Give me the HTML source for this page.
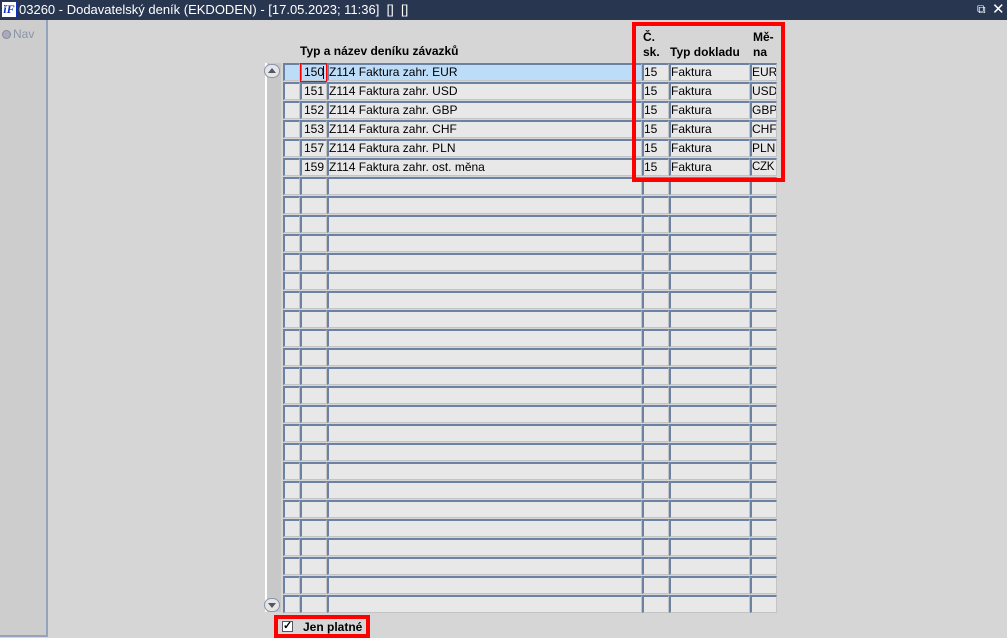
<!DOCTYPE html>
<html><head><meta charset="utf-8"><style>
*{margin:0;padding:0;box-sizing:border-box}
body{width:1007px;height:638px;overflow:hidden;background:#d6d6d6;font-family:"Liberation Sans",Arial,sans-serif;font-size:12px;position:relative}
.tb{position:absolute;left:0;top:0;width:1007px;height:20px;background:#283650;color:#fff;font-size:13px}
.tb .t{position:absolute;left:19px;top:2px}
.logo{position:absolute;left:1px;top:1px;width:16px;height:17px;background:#fff;border:1px solid #1030c0;color:#1030c0;font:bold italic 12px "Liberation Serif",serif;text-align:center;line-height:15px}
.lp{position:absolute;left:0;top:20px;width:48px;height:617px;background:#cdcdcd;border-right:2px solid #95a3bc;border-bottom:2px solid #95a3bc}
.nav{position:absolute;left:2px;top:27px;color:#8a94a8;font-size:12px}
.nav i{display:inline-block;width:9px;height:9px;border-radius:50%;background:#aab;border:1px solid #889;vertical-align:-1px;margin-right:2px}
.c{position:absolute;height:18px;background:#e8e8e8;border-top:2px solid #6d82a3;border-left:2px solid #6d82a3;border-right:1px solid #c4c4c4;border-bottom:1px solid #c4c4c4;line-height:14px;padding-left:0;white-space:nowrap;overflow:hidden}
.r{text-align:right;padding-right:2px}
.h{position:absolute;font-weight:bold;font-size:12px;line-height:15px}
.sb{position:absolute;left:265px;top:63px;width:16px;height:549px;background:#c8c8c8;border-left:2px solid #fff}
.btn{position:absolute;left:264px;width:16px;height:14px;background:#e6e6e6;border:1px solid #8a96ad;border-radius:7px}
.red{position:absolute;border:4px solid #f00}
</style></head><body>
<div class="tb"><div class="logo">ĭF</div><span class="t">03260 - Dodavatelský deník (EKDODEN) - [17.05.2023; 11:36]&nbsp; [] &nbsp;[]</span>
<span style="position:absolute;left:977px;top:2px;font-size:12px">⧉</span><span style="position:absolute;left:992px;top:0px;font-size:15px">✕</span></div>
<div class="lp"></div>
<div class="nav"><i></i>Nav</div>
<div class="h" style="left:300px;top:44px">Typ a název deníku závazků</div>
<div class="h" style="left:643px;top:30px">Č.<br>sk.</div>
<div class="h" style="left:670px;top:45px">Typ dokladu</div>
<div class="h" style="left:753px;top:30px">Mě-<br>na</div>
<div class="sb"></div>
<div class="btn" style="top:64px"><span style="position:absolute;left:3px;top:3px;width:0;height:0;border-left:4px solid transparent;border-right:4px solid transparent;border-bottom:5px solid #556"></span></div>
<div class="btn" style="top:598px"><span style="position:absolute;left:3px;top:4px;width:0;height:0;border-left:4px solid transparent;border-right:4px solid transparent;border-top:5px solid #556"></span></div>
<div id="g">
<div class="c" style="left:283px;top:63px;width:17px;background:#bcdcf8"></div><div class="c r" style="left:300px;top:63px;width:27px;background:#bcdcf8">150</div><div class="c" style="left:327px;top:63px;width:315px;background:#bcdcf8">Z114 Faktura zahr. EUR</div><div class="c" style="left:642px;top:63px;width:27px">15</div><div class="c" style="left:669px;top:63px;width:81px">Faktura</div><div class="c" style="left:750px;top:63px;width:27px">EUR</div>
<div class="c" style="left:283px;top:82px;width:17px"></div><div class="c r" style="left:300px;top:82px;width:27px">151</div><div class="c" style="left:327px;top:82px;width:315px">Z114 Faktura zahr. USD</div><div class="c" style="left:642px;top:82px;width:27px">15</div><div class="c" style="left:669px;top:82px;width:81px">Faktura</div><div class="c" style="left:750px;top:82px;width:27px">USD</div>
<div class="c" style="left:283px;top:101px;width:17px"></div><div class="c r" style="left:300px;top:101px;width:27px">152</div><div class="c" style="left:327px;top:101px;width:315px">Z114 Faktura zahr. GBP</div><div class="c" style="left:642px;top:101px;width:27px">15</div><div class="c" style="left:669px;top:101px;width:81px">Faktura</div><div class="c" style="left:750px;top:101px;width:27px">GBP</div>
<div class="c" style="left:283px;top:120px;width:17px"></div><div class="c r" style="left:300px;top:120px;width:27px">153</div><div class="c" style="left:327px;top:120px;width:315px">Z114 Faktura zahr. CHF</div><div class="c" style="left:642px;top:120px;width:27px">15</div><div class="c" style="left:669px;top:120px;width:81px">Faktura</div><div class="c" style="left:750px;top:120px;width:27px">CHF</div>
<div class="c" style="left:283px;top:139px;width:17px"></div><div class="c r" style="left:300px;top:139px;width:27px">157</div><div class="c" style="left:327px;top:139px;width:315px">Z114 Faktura zahr. PLN</div><div class="c" style="left:642px;top:139px;width:27px">15</div><div class="c" style="left:669px;top:139px;width:81px">Faktura</div><div class="c" style="left:750px;top:139px;width:27px">PLN</div>
<div class="c" style="left:283px;top:158px;width:17px"></div><div class="c r" style="left:300px;top:158px;width:27px">159</div><div class="c" style="left:327px;top:158px;width:315px">Z114 Faktura zahr. ost. měna</div><div class="c" style="left:642px;top:158px;width:27px">15</div><div class="c" style="left:669px;top:158px;width:81px">Faktura</div><div class="c" style="left:750px;top:158px;width:27px;font-size:11.5px;letter-spacing:-0.3px">CZK</div>
</div>
<script>
var g=document.getElementById('g'),cols=[[283,17],[300,27],[327,315],[642,27],[669,81],[750,27]],h='';
for(var i=6;i<29;i++){var y=63+i*19;cols.forEach(function(c){h+='<div class="c" style="left:'+c[0]+'px;top:'+y+'px;width:'+c[1]+'px"></div>';});}
g.insertAdjacentHTML('beforeend',h);
</script>
<div style="position:absolute;left:300px;top:63px;width:27px;height:19px;border:1px solid #f00"></div>
<div style="position:absolute;left:323px;top:66px;width:1px;height:13px;background:#000"></div>
<div class="red" style="left:632px;top:22px;width:153px;height:160px"></div>
<div class="red" style="left:274px;top:615px;width:96px;height:23px"></div>
<div style="position:absolute;left:282px;top:621px;width:11px;height:11px;background:#fff;border:1px solid #556;font-size:11px;line-height:9px;text-align:center;font-weight:bold">✓</div>
<div class="h" style="left:303px;top:620px">Jen platné</div>
</body></html>
